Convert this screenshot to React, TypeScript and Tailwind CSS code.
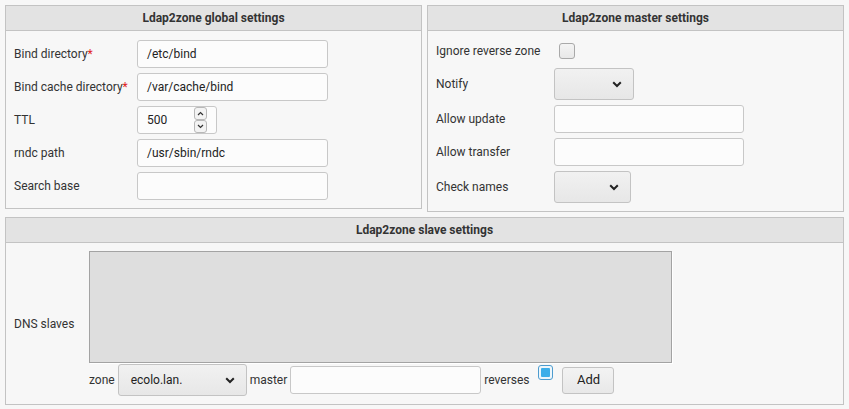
import React from "react";

function Panel({
  title,
  className = "",
  children,
}: {
  title: string;
  className?: string;
  children: React.ReactNode;
}) {
  return (
    <div className={"border border-[#c3c3c3] " + className}>
      <div className="h-[25px] bg-[#e3e3e3] border-b border-[#c3c3c3] flex items-center justify-center font-bold text-[12px] text-[#333]">
        {title}
      </div>
      {children}
    </div>
  );
}

function TextBox({ value = "", w }: { value?: string; w: string }) {
  return (
    <div
      className={
        "h-[28px] rounded-[3px] border border-[#c8c8c8] bg-[#fcfcfc] px-[9px] flex items-center text-[12px] text-[#222] " +
        w
      }
    >
      {value}
    </div>
  );
}

function Chevron() {
  return (
    <svg width="10" height="7" viewBox="0 0 10 7" className="shrink-0">
      <polyline
        points="1.2,1.2 5,5 8.8,1.2"
        fill="none"
        stroke="#232323"
        strokeWidth="2"
      />
    </svg>
  );
}

function Select({ value = "", w }: { value?: string; w: string }) {
  return (
    <div
      className={
        "h-[32px] rounded-[3px] border border-[#c3c3c3] bg-gradient-to-b from-[#f1f1f1] to-[#e7e7e7] pl-[12px] pr-[11px] flex items-center justify-between text-[12px] text-[#222] " +
        w
      }
    >
      <span>{value}</span>
      <Chevron />
    </div>
  );
}

function Spinner() {
  return (
    <div className="flex flex-col w-[13px]">
      <div className="h-[13px] rounded-[3px] border border-[#b8b8b8] bg-[#f3f3f3] flex items-center justify-center">
        <svg width="7" height="5" viewBox="0 0 7 5">
          <polyline points="1,4 3.5,1.5 6,4" fill="none" stroke="#333" strokeWidth="1.2" />
        </svg>
      </div>
      <div className="h-[13px] rounded-[3px] border border-[#b8b8b8] bg-[#f3f3f3] flex items-center justify-center">
        <svg width="7" height="5" viewBox="0 0 7 5">
          <polyline points="1,1 3.5,3.5 6,1" fill="none" stroke="#333" strokeWidth="1.2" />
        </svg>
      </div>
    </div>
  );
}

function Req() {
  return <span className="text-[#e02020]">*</span>;
}

export default function App() {
  return (
    <div className="w-[849px] h-[409px] bg-[#f7f7f7] p-[5px] font-['Roboto',sans-serif] text-[12px] text-[#333]">
      <div className="flex gap-[5px] items-start">
        <Panel title="Ldap2zone global settings" className="w-[417px]">
          <div className="px-[8px] pt-[9px] pb-[8px] flex flex-col gap-[5px]">
            <div className="flex items-center">
              <div className="w-[123px]">
                Bind directory
                <Req />
              </div>
              <TextBox value="/etc/bind" w="w-[191px]" />
            </div>
            <div className="flex items-center">
              <div className="w-[123px]">
                Bind cache directory
                <Req />
              </div>
              <TextBox value="/var/cache/bind" w="w-[191px]" />
            </div>
            <div className="flex items-center">
              <div className="w-[123px]">TTL</div>
              <div className="h-[28px] w-[80px] rounded-[3px] border border-[#c8c8c8] bg-[#fcfcfc] pl-[9px] pr-[9px] flex items-center justify-between text-[12px] text-[#222]">
                <span>500</span>
                <Spinner />
              </div>
            </div>
            <div className="flex items-center">
              <div className="w-[123px]">rndc path</div>
              <TextBox value="/usr/sbin/rndc" w="w-[191px]" />
            </div>
            <div className="flex items-center">
              <div className="w-[123px]">Search base</div>
              <TextBox w="w-[191px]" />
            </div>
          </div>
        </Panel>

        <Panel title="Ldap2zone master settings" className="w-[417px]">
          <div className="px-[8px] pt-[8px] pb-[8px] flex flex-col gap-[5px]">
            <div className="flex items-center h-[24px]">
              <div className="w-[118px]">Ignore reverse zone</div>
              <div className="ml-[5px] w-[16px] h-[16px] rounded-[3px] border border-[#a9a9a9] bg-gradient-to-b from-[#f4f4f4] to-[#e8e8e8]" />
            </div>
            <div className="flex items-center">
              <div className="w-[118px]">Notify</div>
              <Select w="w-[80px]" />
            </div>
            <div className="flex items-center">
              <div className="w-[118px]">Allow update</div>
              <TextBox w="w-[190px]" />
            </div>
            <div className="flex items-center">
              <div className="w-[118px]">Allow transfer</div>
              <TextBox w="w-[190px]" />
            </div>
            <div className="flex items-center">
              <div className="w-[118px]">Check names</div>
              <Select w="w-[77px]" />
            </div>
          </div>
        </Panel>
      </div>

      <Panel title="Ldap2zone slave settings" className="mt-[5px] w-[839px]">
        <div className="px-[8px] pt-[8px] pb-[8px] flex items-center">
          <div className="w-[75px]">DNS slaves</div>
          <div className="flex flex-col">
            <div className="w-[583px] h-[112px] bg-[#dedede] border border-[#a3a3a3] shadow-[1px_1px_0_#ffffff]" />
            <div className="mt-[1px] flex items-center h-[32px]">
              <span>zone</span>
              <Select value="ecolo.lan." w="ml-[3px] w-[129px]" />
              <span className="ml-[3px]">master</span>
              <TextBox w="ml-[3px] w-[191px]" />
              <span className="ml-[3px]">reverses</span>
              <div className="ml-[9px] mb-[16px] w-[15px] h-[15px] rounded-[3px] border border-[#4d9ccf] bg-[#eef6fb] p-[2px]">
                <div className="w-full h-full rounded-[1px] bg-[#3daee9]" />
              </div>
              <div className="ml-[9px] h-[27px] w-[52px] rounded-[3px] border border-[#c3c3c3] bg-gradient-to-b from-[#f3f3f3] to-[#e8e8e8] flex items-center justify-center text-[13px] text-[#222]">
                Add
              </div>
            </div>
          </div>
        </div>
      </Panel>
    </div>
  );
}
